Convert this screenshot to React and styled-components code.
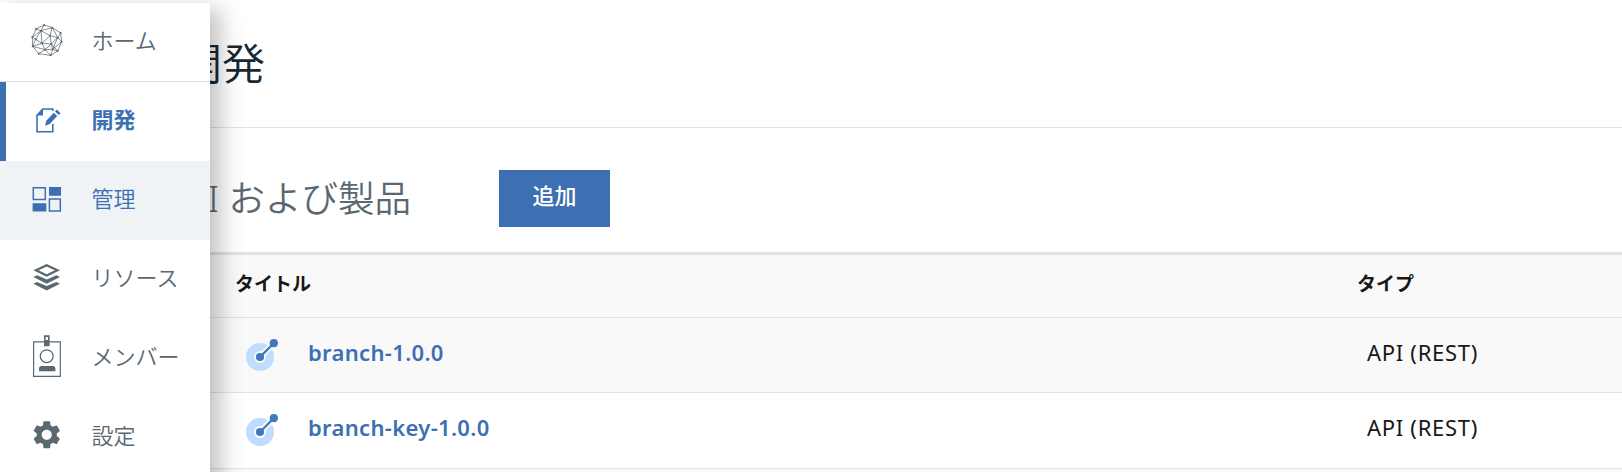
import React from 'react';
import styled, { createGlobalStyle } from 'styled-components';
import { MdSettings } from 'react-icons/md';

const Global = createGlobalStyle`
  * { box-sizing: border-box; }
  html, body { margin: 0; height: 100%; overflow: hidden; background: #fff; }
  body { font-family: "Noto Sans", "Noto Sans CJK JP", sans-serif; color: #171717; }
`;

const Page = styled.div`
  position: relative;
  width: 100%;
  height: 472px;
  overflow: hidden;
`;

const Drawer = styled.nav`
  position: absolute;
  z-index: 2;
  top: 3px;
  left: 0;
  width: 210px;
  height: 500px;
  background: #fff;
  box-shadow: 8px 8px 22px 2px rgba(0, 0, 0, 0.25);
`;

const NavItem = styled.a`
  display: flex;
  align-items: flex-start;
  height: 79px;
  padding: 15px 0 0 24px;
  color: ${(p) => (p.$accent ? '#3d70b2' : '#5a6872')};
  background: ${(p) => (p.$hover ? '#eff3f6' : 'transparent')};
  border-bottom: ${(p) => (p.$divided ? '1px solid #dfe3e6' : '0')};
  box-shadow: ${(p) => (p.$current ? 'inset 6px 0 0 #3d70b2' : 'none')};
`;

const NavIcon = styled.svg`
  flex: none;
  width: 44px;
  height: 48px;
  fill: none;
`;

const GearSlot = styled.span`
  display: flex;
  flex: none;
  width: 44px;
  height: 48px;
  padding: 5px 0 0 6px;
`;

const NavLabel = styled.span`
  margin-left: 23.5px;
  font-family: "Noto Sans CJK JP", sans-serif;
  font-size: 22px;
  line-height: 42px;
  font-weight: ${(p) => (p.$bold ? 600 : 350)};
  white-space: nowrap;
`;

const Main = styled.main`
  display: flex;
  flex-direction: column;
`;

const Header = styled.header`
  height: 128px;
  padding: 30px 0 0 179px;
  border-bottom: 1px solid #dfe3e6;
`;

const Title = styled.h1`
  margin: 0;
  font: 350 43px/62px "Noto Sans CJK JP", sans-serif;
  color: #152935;
`;

const Toolbar = styled.section`
  display: flex;
  align-items: flex-start;
  height: 124px;
  padding-top: 42px;
`;

const Subtitle = styled.h2`
  flex: none;
  width: 411px;
  margin: 0 88px 0 0;
  font: 350 36.5px/57px "Noto Sans", "Noto Sans CJK JP", sans-serif;
  color: #5a6872;
  text-align: right;
  white-space: nowrap;
`;

const AddButton = styled.button`
  width: 111px;
  height: 57px;
  padding: 0 0 8px;
  border: 0;
  background: #3d70b2;
  color: #fff;
  font: 500 22px/49px "Noto Sans CJK JP", sans-serif;
`;

const Table = styled.div`
  border-top: 3px solid #dfe3e6;
`;

const Row = styled.div`
  display: grid;
  grid-template-columns: 1122px 1fr;
  height: ${(p) => p.$height}px;
  padding-left: 235px;
  background: ${(p) => (p.$shaded ? '#f9f9f9' : '#fff')};
  border-bottom: 1px solid #dfe3e6;
`;

const HeadCell = styled.div`
  font: 700 19px/55px "Noto Sans CJK JP", sans-serif;
`;

const NameCell = styled.div`
  display: flex;
  align-items: flex-start;
  padding: 21px 0 0 9px;
`;

const NodeIcon = styled.svg`
  width: 36px;
  height: 36px;
  flex: none;
`;

const ApiLink = styled.a`
  margin-left: 28px;
  font-size: 22px;
  line-height: 26px;
  font-weight: 600;
  letter-spacing: 0.33px;
  color: #3d70b2;
`;

const TypeCell = styled.div`
  padding: 21px 0 0 10px;
  font-size: 22px;
  line-height: 26px;
  letter-spacing: 0.7px;
`;

const nodes = [
  [72, 30], [97, 38], [122, 54], [125, 80], [113, 108], [92, 121], [56, 116], [38, 94], [37, 67], [48, 42],
  [63, 47], [90, 62], [113, 68], [47, 73], [66, 85], [94, 87], [75, 104], [98, 103],
].map(([x, y]) => [x / 3 - 4, y / 3 - 3]);

const links = [
  [0, 1], [1, 2], [2, 3], [3, 4], [4, 5], [5, 6], [6, 7], [7, 8], [8, 9], [9, 0],
  [0, 10], [9, 10], [10, 1], [10, 11], [1, 11], [1, 12], [2, 12], [11, 12], [8, 10], [8, 13],
  [10, 14], [13, 14], [7, 13], [11, 14], [11, 15], [14, 15], [12, 15], [12, 3], [14, 16],
  [7, 14], [7, 16], [6, 16], [16, 5], [16, 15], [15, 17], [17, 5], [17, 4], [15, 4], [12, 17], [3, 17], [16, 17], [13, 10],
];

const HomeIcon = () => (
  <NavIcon viewBox="0 0 44 48">
    <path
      d={links.map(([a, b]) => `M${nodes[a].join(' ')}L${nodes[b].join(' ')}`).join('')}
      stroke="currentColor"
      strokeWidth="0.75"
    />
    {nodes.map(([x, y], i) => <circle key={i} cx={x} cy={y} r="1" fill="currentColor" />)}
  </NavIcon>
);

const DevelopIcon = () => (
  <NavIcon viewBox="0 0 44 48">
    <path d="M28.8 14V12H18.8L13 18.2V34.8H28.8V27" stroke="currentColor" strokeWidth="1.6" />
    <path d="M12.5 18.4L19 11.5V18.4Z" fill="currentColor" />
    <path d="M21 28.8L22.3 23.8L29.8 15.8L33.2 19L25.7 27.1Z" fill="currentColor" />
    <path d="M31 14.5L32.8 12.6L36.6 16.2L34.8 18.1Z" fill="currentColor" />
  </NavIcon>
);

const ManageIcon = () => (
  <NavIcon viewBox="0 0 44 48">
    <path d="M9.3 11.8H21.3V23.6H9.3ZM25.4 23.1H36.3V35.1H25.4Z" stroke="currentColor" strokeWidth="1.5" />
    <path d="M25 11H37V19.8H25ZM8.6 27.2H22.3V35.6H8.6Z" fill="currentColor" />
  </NavIcon>
);

const ResourcesIcon = () => (
  <NavIcon viewBox="0 0 44 48">
    <path fillRule="evenodd" fill="currentColor" d="M22.7 9L36 15.3L22.7 21.7L9.4 15.3ZM22.7 11.5L14.6 15.3L22.7 19.2L30.8 15.3Z" />
    <path fill="currentColor" d="M9.4 22L13 20.2L22.7 24.4L32.4 20.2L36 22L22.7 28.7ZM9.4 28.7L13 26.9L22.7 31.1L32.4 26.9L36 28.7L22.7 35.4Z" />
  </NavIcon>
);

const MembersIcon = () => (
  <NavIcon viewBox="0 0 44 48">
    <path d="M9.6 7.9H36.3V42.4H9.6Z" stroke="currentColor" strokeWidth="1.2" />
    <path fillRule="evenodd" fill="currentColor" d="M20 1.3H25.6V12.2H20ZM21.6 3V6H24V3Z" />
    <circle cx="22.7" cy="22.2" r="6.4" stroke="currentColor" strokeWidth="1.2" />
    <path fill="currentColor" d="M15 37.3V34.5Q15 32 17.5 32H29Q31.4 32 31.4 34.5V37.3Z" />
  </NavIcon>
);

const SettingsIcon = () => <GearSlot><MdSettings size={33.5} /></GearSlot>;

const ApiIcon = ({ gap }) => (
  <NodeIcon viewBox="0 0 36 36">
    <circle cx="16" cy="18" r="14" fill="#c0dcff" />
    <path d="M16 18L30 4" stroke={gap} strokeWidth="6" />
    <circle cx="16" cy="18" r="6" fill={gap} />
    <path d="M16 18L30 4" stroke="#4178be" strokeWidth="2.4" />
    <circle cx="16" cy="18" r="4.1" fill="#4178be" />
    <circle cx="29.8" cy="4.2" r="4.1" fill="#4178be" />
  </NodeIcon>
);

const menu = [
  { label: 'ホーム', Icon: HomeIcon, divided: true },
  { label: '開発', Icon: DevelopIcon, accent: true, current: true },
  { label: '管理', Icon: ManageIcon, accent: true, hover: true },
  { label: 'リソース', Icon: ResourcesIcon },
  { label: 'メンバー', Icon: MembersIcon },
  { label: '設定', Icon: SettingsIcon },
];

const apis = [
  { name: 'branch-1.0.0', type: 'API (REST)', shaded: true, height: 75 },
  { name: 'branch-key-1.0.0', type: 'API (REST)', shaded: false, height: 76 },
];

export default function App() {
  return (
    <Page>
      <Global />
      <Drawer>
        {menu.map(({ label, Icon, divided, accent, current, hover }) => (
          <NavItem key={label} $divided={divided} $accent={accent} $current={current} $hover={hover}>
            <Icon />
            <NavLabel $bold={current}>{label}</NavLabel>
          </NavItem>
        ))}
      </Drawer>
      <Main>
        <Header><Title>開発</Title></Header>
        <Toolbar>
          <Subtitle>API および製品</Subtitle>
          <AddButton>追加</AddButton>
        </Toolbar>
        <Table>
          <Row $height={63} $shaded>
            <HeadCell>タイトル</HeadCell>
            <HeadCell>タイプ</HeadCell>
          </Row>
          {apis.map((api) => (
            <Row key={api.name} $height={api.height} $shaded={api.shaded}>
              <NameCell>
                <ApiIcon gap={api.shaded ? '#f9f9f9' : '#fff'} />
                <ApiLink>{api.name}</ApiLink>
              </NameCell>
              <TypeCell>{api.type}</TypeCell>
            </Row>
          ))}
          <Row $height={75} $shaded />
        </Table>
      </Main>
    </Page>
  );
}
